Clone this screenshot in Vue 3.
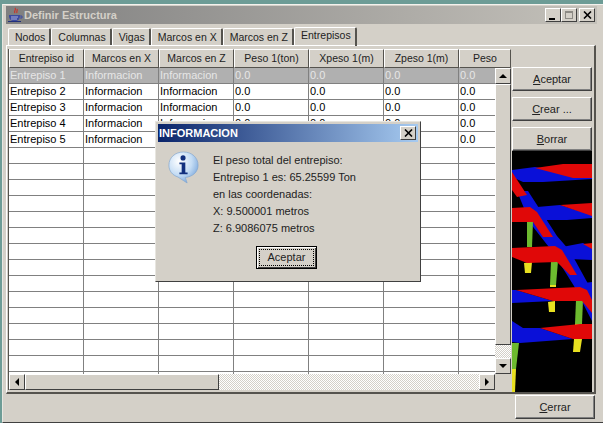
<template>
  <div class="desktop">
    <div class="window">
      <div class="titlebar">
        <svg class="java-icon" width="16" height="16" viewBox="0 0 16 16">
          <path d="M8 1c2 2-2 3 0 5M10 2c1 2-1 2 0 4" fill="none" stroke="#c8352b" stroke-width="1.2" />
          <path d="M2 8h11v1c0 3-2 5-5 5h-1c-3 0-5-2-5-5z" fill="#3c4aa0" />
          <path d="M4 10h7M4 12h6" stroke="#c8ccec" stroke-width="0.8" />
          <path d="M13 9h2v2h-2" fill="none" stroke="#3c4aa0" />
          <rect x="1" y="14" width="13" height="1" fill="#22307a" />
        </svg>
        <span class="title">Definir Estructura</span>
        <div class="win-buttons">
          <span class="win-btn"><i class="min-glyph"></i></span>
          <span class="win-btn off"><i class="max-glyph"></i></span>
          <span class="win-btn close">
            <svg width="9" height="8" viewBox="0 0 9 8"><path d="M1 0.5l7 7M8 0.5l-7 7" stroke="#000" stroke-width="1.6" /></svg>
          </span>
        </div>
      </div>

      <div class="tabs">
        <span v-for="t in tabs" :key="t" :class="['tab', { active: t === 'Entrepisos' }]">{{ t }}</span>
      </div>

      <div class="panel">
        <div class="table-area">
          <div class="grid-wrap">
            <div class="grid">
              <div class="head-row">
                <div v-for="h in headers" :key="h" class="head-cell">{{ h }}</div>
              </div>
              <div v-for="(row, i) in rows" :key="i" :class="['row', { selected: i === 0 }]">
                <div v-for="(c, j) in row" :key="j" class="cell">{{ c }}</div>
              </div>
            </div>
            <div class="vscroll">
              <span class="arrow-btn"><i class="tri up"></i></span>
              <span class="vthumb"></span>
              <span class="vtrack"></span>
              <span class="arrow-btn"><i class="tri down"></i></span>
            </div>
          </div>
          <div class="hscroll">
            <span class="arrow-btn"><i class="tri left"></i></span>
            <span class="hthumb"></span>
            <span class="htrack"></span>
            <span class="arrow-btn"><i class="tri right"></i></span>
          </div>
        </div>

        <div class="side">
          <button class="btn"><u>A</u>ceptar</button>
          <button class="btn"><u>C</u>rear ...</button>
          <button class="btn"><u>B</u>orrar</button>
          <svg class="view3d" viewBox="0 0 80 241" preserveAspectRatio="none">
            <rect width="80" height="241" fill="#000" />
            <g fill="#0a10d8">
              <polygon points="0,19 23,16 80,26 80,28 31,31 11,31 0,26" />
              <polygon points="5,40 16,40 45,85 58,100 80,140 80,170 62,135 40,100 18,72" />
              <polygon points="25,56 48,54 80,64 80,67 55,69 33,69" />
              <polygon points="50,96 71,92 80,97 80,109 58,108" />
              <polygon points="0,139 4,139 41,150 0,152" />
              <polygon points="72,132 80,131 80,146" />
              <polygon points="0,170 11,177 28,177 61,188 8,192 0,191" />
            </g>
            <g fill="#6dba2f">
              <polygon points="15,70 21,70 20,96 15,96" />
              <polygon points="39,110 46,110 44,134 38,134" />
              <polygon points="64,149 71,149 70,173 63,173" />
              <polygon points="0,192 7,192 4,218 0,218" />
            </g>
            <g fill="#e8e020">
              <polygon points="12,112 20,111 19,122 13,122" />
              <polygon points="36,151 43,150 43,161 37,161" />
              <polygon points="62,188 70,188 68,201 61,201" />
              <polygon points="0,218 4,218 3,241 0,241" />
              <rect x="38" y="134" width="6" height="2" />
              <rect x="63" y="173" width="7" height="2" />
            </g>
            <g fill="#e00808">
              <polygon points="23,17 51,13 80,13 80,27 61,27" />
              <polygon points="0,21 15,44 5,46 0,39" />
              <polygon points="0,57 18,56 25,61 41,86 31,86 21,71 0,71" />
              <polygon points="48,54 80,52 80,65" />
              <polygon points="0,97 43,95 50,99 65,124 58,124 45,111 15,112 0,106" />
              <polygon points="71,93 80,92 80,98" />
              <polygon points="4,139 68,136 75,139 80,149 80,162 70,150 41,150" />
              <polygon points="28,177 68,173 80,173 80,188 61,188" />
            </g>
          </svg>
        </div>
      </div>

      <div class="footer">
        <button class="btn close-btn"><u>C</u>errar</button>
      </div>
    </div>

    <div class="dialog">
      <div class="dlg-title">
        <span>INFORMACION</span>
        <span class="win-btn close">
          <svg width="9" height="8" viewBox="0 0 9 8"><path d="M1 0.5l7 7M8 0.5l-7 7" stroke="#000" stroke-width="1.6" /></svg>
        </span>
      </div>
      <div class="dlg-body">
        <svg class="info-icon" width="31" height="33" viewBox="0 0 34 36">
          <defs>
            <radialGradient id="bubble" cx="35%" cy="30%" r="80%">
              <stop offset="0" stop-color="#ffffff" />
              <stop offset="0.55" stop-color="#c4dcf4" />
              <stop offset="1" stop-color="#6f9fd8" />
            </radialGradient>
          </defs>
          <path d="M17 1C8 1 1 7 1 15.500c0 6.500 4 11 10 13l10 6.500-2-6C27 28 33 23 33 15.500 33 7 26 1 17 1z" fill="url(#bubble)" stroke="#7ea4cf" stroke-width="0.7" />
          <circle cx="16.500" cy="7.500" r="2.800" fill="#12307e" />
          <path d="M12.500 12.500h6.500v11h2.500v2h-9v-2h2.500v-9h-2.500z" fill="#12307e" />
        </svg>
        <div class="dlg-text">
          <p v-for="l in lines" :key="l">{{ l }}</p>
        </div>
      </div>
      <div class="dlg-actions">
        <button class="dlg-ok"><span>Aceptar</span></button>
      </div>
    </div>
  </div>
</template>

<script setup>
const tabs = ['Nodos', 'Columnas', 'Vigas', 'Marcos en X', 'Marcos en Z', 'Entrepisos']
const headers = ['Entrepiso id', 'Marcos en X', 'Marcos en Z', 'Peso 1(ton)', 'Xpeso 1(m)', 'Zpeso 1(m)', 'Peso']

const rows = []
for (let i = 1; i <= 20; i++) {
  if (i <= 5) {
    rows.push(['Entrepiso ' + i, 'Informacion', 'Informacion', '0.0', '0.0', '0.0', '0.0'])
  } else {
    rows.push(['', '', '', '', '', '', ''])
  }
}

const lines = [
  'El peso total del entrepiso:',
  'Entrepiso 1 es: 65.25599 Ton',
  'en las coordenadas:',
  'X: 9.500001 metros',
  'Z: 6.9086075 metros'
]
</script>

<style>
html, body { margin: 0; overflow: hidden; }
</style>

<style scoped>
.desktop {
  width: 603px;
  height: 423px;
  position: relative;
  overflow: hidden;
  background: #6d9c96;
  padding: 4px 0 0 2px;
  box-sizing: border-box;
  font-family: "Liberation Sans", "Noto Sans", sans-serif;
  font-size: 11px;
  color: #000;
}

.window {
  height: 419px;
  box-sizing: border-box;
  background: #d4d0c8;
  border-top: 1px solid #f4f2ee;
  border-left: 1px solid #e8e6e0;
  border-bottom: 1px solid #404040;
  padding: 1px 6px 0 3px;
  display: flex;
  flex-direction: column;
}

.titlebar {
  height: 18px;
  flex: none;
  display: flex;
  align-items: center;
  background: linear-gradient(90deg, #7f7f7f, #c4c1ba);
  padding: 0 2px 0 1px;
  gap: 1px;
}

.java-icon { flex: none; }

.title {
  color: #d4d0c8;
  font-weight: 700;
  font-size: 11px;
}

.win-buttons {
  margin-left: auto;
  display: flex;
  gap: 0;
}

.win-btn {
  width: 16px;
  height: 14px;
  box-sizing: border-box;
  background: #d4d0c8;
  border: 1px solid;
  border-color: #fff #404040 #404040 #fff;
  display: flex;
  align-items: center;
  justify-content: center;
  position: relative;
}

.win-btn.close { margin-left: 2px; }

.min-glyph {
  width: 6px;
  height: 2px;
  background: #000;
  margin-top: 7px;
  margin-right: 2px;
}

.max-glyph {
  width: 8px;
  height: 8px;
  box-sizing: border-box;
  border: 1px solid #8c8a84;
  border-top-width: 2px;
}

.tabs {
  display: flex;
  height: 21px;
  flex: none;
  padding: 4px 0 0 2px;
  box-sizing: border-box;
  align-items: flex-end;
}

.tab {
  height: 17px;
  box-sizing: border-box;
  padding: 0 4px 0 6px;
  font-size: 10.5px;
  line-height: 17px;
  border-top: 1px solid #fff;
  border-left: 1px solid #fff;
  border-right: 2px solid #55534e;
  border-radius: 2px 2px 0 0;
  white-space: nowrap;
  color: #222;
}

.tab.active {
  height: 19px;
  position: relative;
  top: 1px;
  margin-top: -3px;
  line-height: 15px;
}

.panel {
  flex: none;
  height: 349px;
  margin-right: 1px;
  box-sizing: border-box;
  border-top: 1px solid #fff;
  border-left: 1px solid #fff;
  border-right: 2px solid #55534e;
  border-bottom: 2px solid #55534e;
  display: flex;
  padding: 3px 2px 0 1px;
}

.table-area {
  width: 503px;
  flex: none;
  display: flex;
  flex-direction: column;
  height: 341px;
  border-left: 1px solid #55534e;
  box-sizing: border-box;
}

.grid-wrap {
  position: relative;
  height: 325px;
  flex: none;
  overflow: hidden;
  background: #fff;
}

.grid {
  width: 502px;
}

.head-row {
  display: flex;
  height: 19px;
}

.head-cell {
  width: 75px;
  flex: none;
  box-sizing: border-box;
  background: #d4d0c8;
  border-top: 1px solid #fff;
  border-left: 1px solid #fff;
  border-right: 1px solid #55534e;
  border-bottom: 1px solid #55534e;
  text-align: center;
  font-size: 10.5px;
  line-height: 17px;
  color: #222;
}

.head-cell:last-child { width: 52px; }

.row {
  display: flex;
  height: 16px;
}

.cell {
  width: 75px;
  flex: none;
  box-sizing: border-box;
  border-right: 1px solid #808080;
  border-bottom: 1px solid #808080;
  padding-left: 1px;
  line-height: 15px;
  white-space: nowrap;
  overflow: hidden;
}

.cell:last-child { width: 52px; }

.row.selected .cell {
  background: #b0b0b0;
  color: #e6e6e6;
}

/* scrollbars sit on top of the grid's last column */
.vscroll {
  position: absolute;
  right: 0;
  top: 19px;
  bottom: 0;
  width: 16px;
  display: flex;
  flex-direction: column;
  background: #d4d0c8;
}

.arrow-btn {
  width: 16px;
  height: 16px;
  flex: none;
  box-sizing: border-box;
  background: #d4d0c8;
  border: 1px solid;
  border-color: #fff #404040 #404040 #fff;
  display: flex;
  align-items: center;
  justify-content: center;
}

.vthumb {
  height: 261px;
  flex: none;
  box-sizing: border-box;
  background: #d4d0c8;
  border: 1px solid;
  border-color: #fff #404040 #404040 #fff;
}

.vtrack {
  flex: 1;
  background: repeating-conic-gradient(#d4d0c8 0 25%, #fff 0 50%) 0 0 / 2px 2px;
}

.hscroll {
  display: flex;
  height: 16px;
  flex: none;
  width: 486px;
}

.hthumb {
  width: 194px;
  flex: none;
  box-sizing: border-box;
  background: #d4d0c8;
  border: 1px solid;
  border-color: #fff #404040 #404040 #fff;
}

.htrack {
  flex: 1;
  background: repeating-conic-gradient(#d4d0c8 0 25%, #fff 0 50%) 0 0 / 2px 2px;
}

.tri {
  width: 0;
  height: 0;
  border: 4px solid transparent;
}

.tri.up { border-bottom-color: #000; border-top-width: 0; }
.tri.down { border-top-color: #000; border-bottom-width: 0; }
.tri.left { border-right-color: #000; border-left-width: 0; }
.tri.right { border-left-color: #000; border-right-width: 0; }

.side {
  width: 80px;
  flex: none;
  margin-left: 1px;
  margin-top: 18px;
  display: flex;
  flex-direction: column;
  gap: 6px;
}

.btn {
  width: 80px;
  height: 24px;
  flex: none;
  box-sizing: border-box;
  background: #d4d0c8;
  border: 1px solid;
  border-color: #fff #404040 #404040 #fff;
  box-shadow: inset -1px -1px 0 #808080;
  font: inherit;
  color: #222;
  padding: 0 0 1px;
}

.view3d {
  width: 80px;
  height: 241px;
  flex: none;
  margin-top: -6px;
  display: block;
}

.footer {
  flex: 1;
  display: flex;
  justify-content: flex-end;
  padding: 1px 2px 0 0;
}

.close-btn { margin-left: auto; }

/* modal sits over the window */
.dialog {
  position: absolute;
  left: 155px;
  top: 121px;
  width: 266px;
  height: 161px;
  box-sizing: border-box;
  background: #d4d0c8;
  border: 1px solid;
  border-color: #e8e6e0 #404040 #404040 #e8e6e0;
  padding: 2px;
  display: flex;
  flex-direction: column;
}

.dlg-title {
  height: 18px;
  flex: none;
  background: linear-gradient(90deg, #0a246a, #a6caf0);
  color: #fff;
  font-weight: 700;
  font-size: 11px;
  display: flex;
  align-items: center;
  justify-content: space-between;
  padding: 0 2px 0 1px;
}

.dlg-body {
  display: flex;
  padding: 10px 0 0 10px;
  gap: 14px;
  height: 104px;
  box-sizing: border-box;
  flex: none;
}

.info-icon { flex: none; margin-top: -1px; }

.dlg-text p {
  margin: 0;
  height: 17px;
  line-height: 17px;
  white-space: nowrap;
  color: #222;
}

.dlg-actions {
  display: flex;
  justify-content: center;
  padding-right: 3px;
}

.dlg-ok {
  width: 61px;
  height: 23px;
  box-sizing: border-box;
  background: #d4d0c8;
  border: 1px solid #000;
  box-shadow: inset 1px 1px 0 #fff, inset -1px -1px 0 #404040;
  padding: 2px;
  font: inherit;
  color: #222;
}

.dlg-ok span {
  display: block;
  height: 100%;
  line-height: 15px;
  box-sizing: border-box;
  border: 1px dotted #000;
}
</style>
